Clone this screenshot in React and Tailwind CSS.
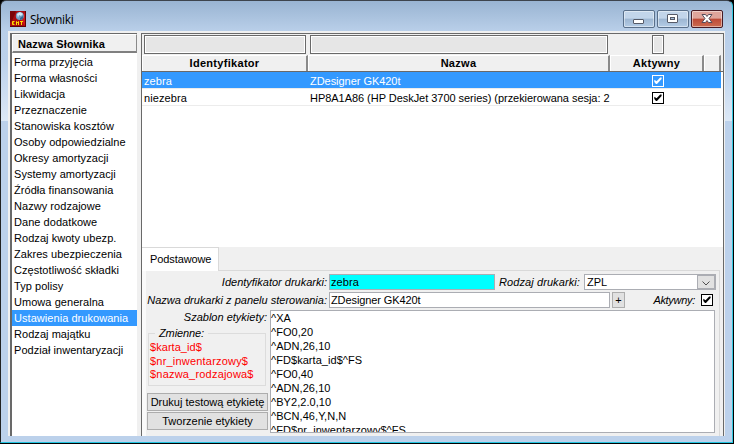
import React from 'react';

const dictionaries = [
  'Forma przyjęcia', 'Forma własności', 'Likwidacja', 'Przeznaczenie', 'Stanowiska kosztów',
  'Osoby odpowiedzialne', 'Okresy amortyzacji', 'Systemy amortyzacji', 'Źródła finansowania',
  'Nazwy rodzajowe', 'Dane dodatkowe', 'Rodzaj kwoty ubezp.', 'Zakres ubezpieczenia',
  'Częstotliwość składki', 'Typ polisy', 'Umowa generalna', 'Ustawienia drukowania',
  'Rodzaj majątku', 'Podział inwentaryzacji',
];

const printers = [
  { id: 'zebra', name: 'ZDesigner GK420t' },
  { id: 'niezebra', name: 'HP8A1A86 (HP DeskJet 3700 series) (przekierowana sesja: 2' },
];

const template = [
  '^XA', '^FO0,20', '^ADN,26,10', '^FD$karta_id$^FS', '^FO0,40', '^ADN,26,10',
  '^BY2,2.0,10', '^BCN,46,Y,N,N', '^FD$nr_inwentarzowy$^FS',
];

const Check = ({ inverted }) => (
  <svg width="12" height="12" viewBox="0 0 12 12" className={inverted ? 'text-white' : 'text-black'}>
    <rect x="0.5" y="0.5" width="11" height="11" fill={inverted ? '#3399ff' : '#fff'} stroke="currentColor" />
    <path d="M2.3 4.8 L4.6 6.2 L8.2 2.4 H9.6 V4 L5 9 H4 L2.3 7Z" fill="currentColor" />
  </svg>
);

const AppIcon = () => (
  <svg width="16" height="16" viewBox="0 0 16 16">
    <rect width="16" height="16" fill="#a80c10" />
    <path d="M0 0H6L2 10L0 12Z" fill="#7a0508" />
    <path d="M11 10L15 15V1L13 7Z" fill="#d01818" />
    <path d="M0 15.5H16M15.5 0V16" stroke="#5a0406" />
    <circle cx="9.8" cy="5" r="4" fill="#6f9fc4" />
    <path d="M7 3L10 1L13 3L11 5L9 4L8 7Z" fill="#d4eaf5" />
    <path d="M10 7L13 5V8L10 9Z" fill="#34658f" />
    <path d="M4.5 10.5H2.5V13.5H4.5M2.5 12H4M6.5 14V10.5L7.5 12L8.5 10.5V14M10 10.5H13M11.5 10.5V14" fill="none" stroke="#ffe000" />
  </svg>
);

const WindowButton = ({ kind }) => (
  <div className={`flex h-[18px] w-8 items-center justify-center rounded-[2px] border shadow-[inset_0_0_0_1px_rgba(255,255,255,0.45)] ${
    kind === 'close'
      ? 'border-[#471a24] bg-linear-to-b from-[#dfa49b] from-45% via-[#bd4937] via-50% to-[#cb6b50]'
      : 'border-[#596f8a] bg-linear-to-b from-[#c2d5ea] from-45% via-[#9db6d2] via-50% to-[#b4cce6]'
  }`}>
    <svg width="14" height="12" viewBox="0 0 14 12">
      {kind === 'min' && <rect x="1.5" y="6.5" width="10" height="4" rx="0.5" fill="#fff" stroke="#555a68" />}
      {kind === 'max' && (
        <>
          <rect x="1.5" y="1.5" width="10" height="8" rx="0.5" fill="#fff" stroke="#555a68" />
          <rect x="4.5" y="4.5" width="4" height="2" fill="#a7c0dc" stroke="#555a68" />
        </>
      )}
      {kind === 'close' && (
        <path d="M2 1.5H5.5L7 3.5L8.5 1.5H12L9 5.5L12 9.5H8.5L7 7.5L5.5 9.5H2L5 5.5Z" fill="#fff" stroke="#564c5a" />
      )}
    </svg>
  </div>
);

const HeaderCell = ({ className, children }) => (
  <div className={`flex h-4 items-center justify-center border-t border-l border-r-2 border-t-white border-l-white border-r-[#8a8a8a] bg-[#f0f0f0] font-bold tracking-[0.3px] ${className}`}>
    {children}
  </div>
);

const FilterBox = ({ className }) => (
  <div className={`h-[19px] shrink-0 border border-[#696969] bg-[#e6e6e6] shadow-[inset_0_0_0_1px_#fff] ${className}`} />
);

const Sidebar = () => (
  <div className="flex w-[127px] flex-col border-t border-l-2 border-[#696969] bg-white">
    <div className="h-[19px] shrink-0 border-r border-b-2 border-t border-l border-t-white border-l-white border-r-[#8a8a8a] border-b-[#808080] bg-[#f0f0f0] pl-[5px] text-[11px] leading-[19px] font-bold tracking-[0.15px]">
      Nazwa Słownika
    </div>
    <div className="pt-px">
      {dictionaries.map((d) => (
        <div key={d} className={`h-4 pl-[2px] leading-[17px] tracking-[0.05px] ${d === 'Ustawienia drukowania' ? 'bg-[#3399ff] text-white' : ''}`}>
          {d}
        </div>
      ))}
    </div>
  </div>
);

const PrinterTable = () => (
  <div className="h-[213px] shrink-0 bg-white">
    <div className="flex h-[21px] bg-[#f0f0f0] pt-px pl-[2px]">
      <FilterBox className="w-[162px]" />
      <FilterBox className="ml-1 w-[298px]" />
      <FilterBox className="ml-11 w-3" />
    </div>
    <div className="flex h-[17px] border-b border-[#696969] bg-[#f0f0f0]">
      <HeaderCell className="w-[166px]">Identyfikator</HeaderCell>
      <HeaderCell className="w-[302px]">Nazwa</HeaderCell>
      <HeaderCell className="w-[94px]">Aktywny</HeaderCell>
      <HeaderCell className="w-[17px]" />
    </div>
    {printers.map((p, i) => (
      <div key={p.id} className={`flex h-[17px] w-[579px] border-b border-[#ececec] leading-[18px] ${i === 0 ? 'bg-[#3399ff] text-white' : ''}`}>
        <div className="w-[166px] pl-[2px] tracking-[0.1px]">{p.id}</div>
        <div className="w-[302px] pl-[2px] tracking-[-0.04px] whitespace-nowrap">{p.name}</div>
        <div className="flex w-24 items-center justify-center pt-px"><Check inverted={i === 0} /></div>
      </div>
    ))}
  </div>
);

const PrinterForm = () => (
  <div className="flex min-h-0 flex-1 flex-col bg-[#f0f0f0]">
    <div className="mr-[3px] flex h-6 shrink-0">
      <div className="w-[77px] border-t border-r border-[#d9d9d9] bg-white pl-2 text-[11px] leading-[22px] tracking-[-0.1px]">Podstawowe</div>
      <div className="flex-1 border-b border-[#d9d9d9]" />
    </div>
    <div className="mr-[3px] flex min-h-0 flex-1 flex-col border-r border-l-4 border-r-[#d9d9d9] border-l-[#fafafa] pt-[3px]">
      <div className="flex h-4 items-center">
        <div className="w-[183px] pr-[2px] text-right italic">Identyfikator drukarki:</div>
        <div className="h-4 w-[166px] border border-[#abadb3] bg-[#00ffff] pl-px leading-[15px] tracking-[0.1px]">zebra</div>
        <div className="w-[89px] pr-1 text-right tracking-[0.1px] italic">Rodzaj drukarki:</div>
        <div className="flex h-4 w-[132px] border border-[#abadb3] bg-white leading-[15px]">
          <div className="flex-1 pl-[2px]">ZPL</div>
          <div className="flex w-[18px] items-center justify-center border border-[#abadb3] bg-[#e1e1e1] pt-[3px]">
            <svg width="8" height="5" viewBox="0 0 8 5"><path d="M0.5 0.5L4 4L7.5 0.5" fill="none" stroke="#505050" /></svg>
          </div>
        </div>
      </div>
      <div className="mt-[2px] flex h-4 items-center">
        <div className="w-[183px] pr-[2px] text-right whitespace-nowrap italic">Nazwa drukarki z panelu sterowania:</div>
        <div className="h-4 w-[281px] border border-[#abadb3] bg-white pl-px leading-[15px] tracking-[-0.1px]">ZDesigner GK420t</div>
        <div className="ml-[2px] h-4 w-[13px] border border-[#adadad] bg-[#e1e1e1] text-center leading-[14px]">+</div>
        <div className="w-[76px] pr-[6px] text-right tracking-[-0.3px] italic">Aktywny:</div>
        <Check />
      </div>
      <div className="mt-[2px] flex h-[123px]">
        <div className="w-[124px] pl-px">
          <div className="h-[15px] pr-[3px] text-right leading-[15px] italic">Szablon etykiety:</div>
          <fieldset className="ml-px h-[61px] w-[118px] border border-[#dcdcdc] pl-px text-[#f00]">
            <legend className="ml-[5px] h-4 px-[4px] leading-4 tracking-[-0.1px] text-black italic">Zmienne:</legend>
            <div className="h-[14px] leading-[12px] tracking-[0.05px]">$karta_id$</div>
            <div className="h-[13px] leading-[12px] tracking-[0.2px]">$nr_inwentarzowy$</div>
            <div className="h-[13px] leading-[12px] tracking-[0.2px]">$nazwa_rodzajowa$</div>
          </fieldset>
          <button className="mt-[7px] block h-[18px] w-[121px] border border-[#adadad] bg-[#e1e1e1] leading-[16px] whitespace-nowrap">Drukuj testową etykietę</button>
          <button className="mt-px block h-[18px] w-[121px] border border-[#adadad] bg-[#e1e1e1] leading-[16px] whitespace-nowrap">Tworzenie etykiety</button>
        </div>
        <div className="w-[445px] overflow-hidden border border-[#abadb3] bg-white">
          {template.map((line, i) => (
            <div key={i} className="h-[14px] leading-[14px] tracking-[0.05px]">{line}</div>
          ))}
        </div>
      </div>
    </div>
  </div>
);

export default function App() {
  return (
    <div className="h-[444px] w-[734px] bg-black font-['Liberation_Sans',Arial,sans-serif] text-[11px] text-black select-none">
      <div className="flex h-[443px] w-[733px] flex-col rounded-t-[6px] border-t border-r border-b border-l border-t-[#3d444d] border-r-[#35c8e0] border-b-[#22c4e0] border-l-[#222] bg-[linear-gradient(to_bottom,#99b4d2_0px,#b9cfe9_30px,#bcd1eb_60px,#dce8f6_120px,#bcd1eb_120px)]">
        <div className="flex h-[30px] shrink-0 items-center pl-[9px]">
          <div className="pt-[6px]"><AppIcon /></div>
          <div className="ml-1 pt-[7px] font-['Open_Sans','Noto_Sans',sans-serif] text-xs tracking-[-0.3px]">Słowniki</div>
          <div className="mr-[9px] ml-auto flex gap-[2px] pt-[6px]">
            <WindowButton kind="min" />
            <WindowButton kind="max" />
            <WindowButton kind="close" />
          </div>
        </div>
        <div className="ml-[7px] flex h-[405px] w-[717px] bg-[#f0f0f0] pt-[2px] pl-[2px]">
          <Sidebar />
          <div className="ml-1 flex w-[583px] flex-col border-t border-r border-l border-[#696969]">
            <PrinterTable />
            <PrinterForm />
          </div>
        </div>
      </div>
    </div>
  );
}
